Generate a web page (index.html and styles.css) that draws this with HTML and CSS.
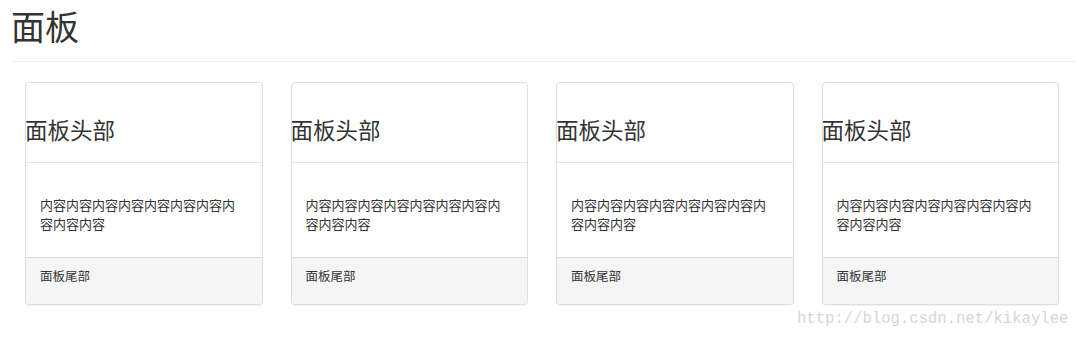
FILE: index.html
```html
<!DOCTYPE html>
<html lang="zh">
<head>
<meta charset="utf-8">
<title>面板</title>
<link rel="stylesheet" href="styles.css">
</head>
<body>
<div class="page">
  <h1 class="title">面板</h1>
  <hr class="divider">
  <div class="grid">
    <div class="panel">
      <div class="panel-head"><h3>面板头部</h3></div>
      <div class="panel-body">内容内容内容内容内容内容内容内容内容内容</div>
      <div class="panel-foot">面板尾部</div>
    </div>
    <div class="panel">
      <div class="panel-head"><h3>面板头部</h3></div>
      <div class="panel-body">内容内容内容内容内容内容内容内容内容内容</div>
      <div class="panel-foot">面板尾部</div>
    </div>
    <div class="panel">
      <div class="panel-head"><h3>面板头部</h3></div>
      <div class="panel-body">内容内容内容内容内容内容内容内容内容内容</div>
      <div class="panel-foot">面板尾部</div>
    </div>
    <div class="panel">
      <div class="panel-head"><h3>面板头部</h3></div>
      <div class="panel-body">内容内容内容内容内容内容内容内容内容内容</div>
      <div class="panel-foot">面板尾部</div>
    </div>
  </div>
</div>
<div class="watermark">http://blog.csdn.net/kikaylee</div>
</body>
</html>
```
FILE: styles.css
```css
html, body {
  margin: 0;
  padding: 0;
  background: #fff;
}
body {
  font-family: "Noto Sans CJK SC", "Liberation Sans", sans-serif;
  color: #333;
  width: 1079px;
  height: 339px;
  overflow: hidden;
  position: relative;
}
.page {
  padding: 0 4px 0 11px;
}
.title {
  margin: 0;
  padding-top: 4px;
  font-size: 34px;
  font-weight: 400;
  line-height: 44px;
  color: #333;
}
.divider {
  margin: 13px 0 0 0;
  border: 0;
  border-top: 1px solid #eee;
  height: 0;
}
.grid {
  display: grid;
  grid-template-columns: repeat(4, 1fr);
  column-gap: 28px;
  margin: 20px 16px 0 14px;
}
.panel {
  border: 1px solid #ddd;
  border-radius: 4px;
  box-shadow: 0 1px 1px rgba(0,0,0,0.05);
  overflow: hidden;
  background: #fff;
}
.panel-head {
  height: 79px;
  border-bottom: 1px solid #e6e6e6;
  display: flex;
  align-items: flex-end;
}
.panel-head h3 {
  margin: 0 0 19px -1px;
  font-size: 22.5px;
  font-weight: 400;
  line-height: 28px;
  color: #333;
}
.panel-body {
  padding: 32px 15px 24px 14px;
  font-size: 13px;
  line-height: 19px;
  height: 38px;
  border-bottom: 1px solid #ddd;
}
.panel-foot {
  background: #f5f5f5;
  padding: 8px 14px 0 14px;
  height: 38px;
  font-size: 12.5px;
  line-height: 19px;
}
.watermark {
  position: absolute;
  left: 797px;
  top: 309px;
  font-family: "Liberation Mono", monospace;
  font-size: 15.6px;
  line-height: 20px;
  color: #d6d6d6;
  white-space: nowrap;
}
```
